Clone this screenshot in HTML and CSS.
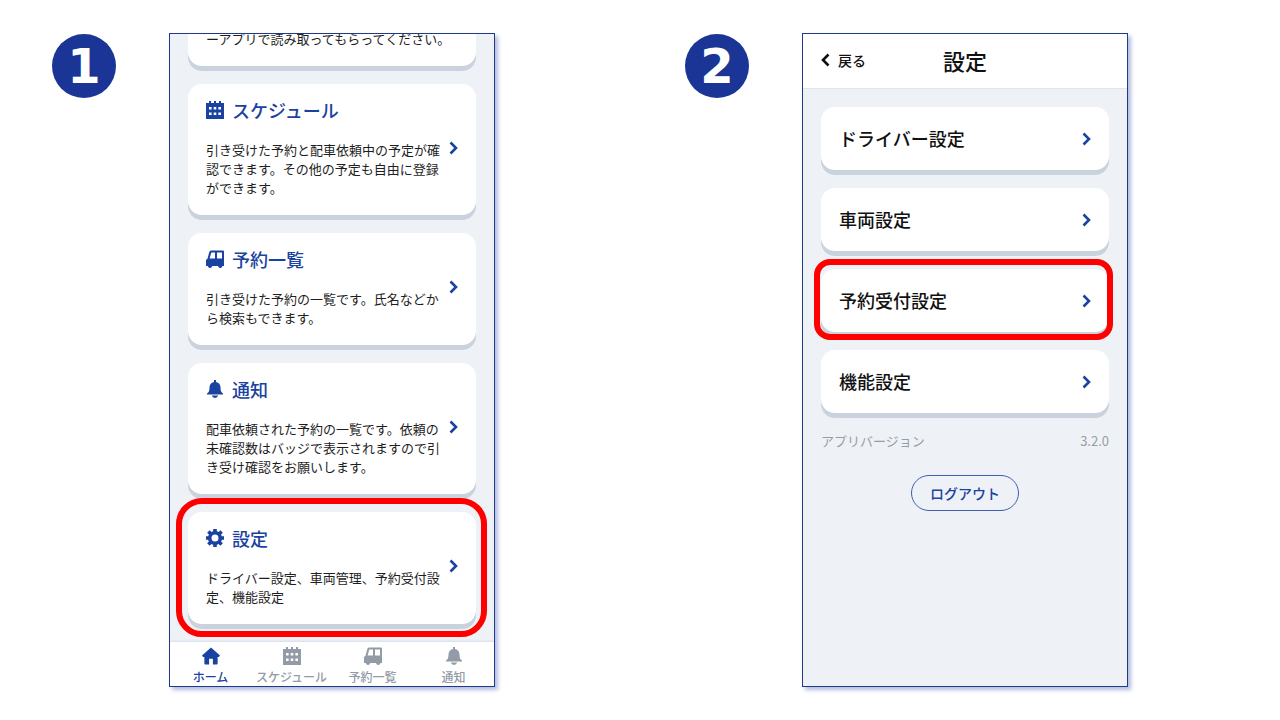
FILE: index.html
```html
<!DOCTYPE html>
<html lang="ja">
<head>
<meta charset="utf-8">
<meta name="viewport" content="width=device-width, initial-scale=1">
<title>設定</title>
<link rel="stylesheet" href="styles.css">
</head>
<body>
<svg class="sprite" aria-hidden="true">
  <symbol id="calendar" viewBox="1 1 18 18"><path fill-rule="evenodd" d="M1 3H4V1H6V3H9V1H11V3H14V1H16V3H19V19H1ZM4 7V9.600H6.600V7ZM8.700 7V9.600H11.300V7ZM13.400 7V9.600H16V7ZM4 12.400V15H6.600V12.400ZM8.700 12.400V15H11.300V12.400ZM13.400 12.400V15H16V12.400Z"/></symbol>
  <symbol id="van" viewBox="1 1 18 18"><path fill-rule="evenodd" d="M6 1.500H18Q19 1.500 19 2.500V17H17.500Q17 19 15.200 19T13 17H7.300Q6.800 19 5 19T2.800 17H1V11.500Q1 10.300 2.500 9.800L4.300 3Q4.700 1.500 6 1.500ZM6.300 3.500L4.600 9.500H10V3.500ZM12 3.500V9.500H17V3.500Z"/></symbol>
  <symbol id="bell" viewBox="1 1.400 18 18"><path d="M9 1.500H11V3.300C14.200 4 15.500 6.200 15.500 9C15.500 12.300 16 13.500 18 15V16H2V15C4 13.500 4.500 12.300 4.500 9C4.500 6.200 5.800 4 9 3.300ZM6.800 17H13.200Q12.500 19.300 10 19.300T6.800 17Z"/></symbol>
  <symbol id="gear" viewBox="1 1 18 18"><g fill="none" stroke="currentColor"><circle cx="10" cy="10" r="5.300" stroke-width="3.600"/><path stroke-width="3.600" d="M10 1V4M10 16V19M1 10H4M16 10H19M3.400 3.400L5.700 5.700M14.300 14.300L16.600 16.600M3.400 16.600L5.700 14.300M14.300 5.700L16.600 3.400"/></g></symbol>
  <symbol id="home" viewBox="0.500 0.500 19 19"><path d="M10 1L19.500 9.500L18.300 11H17V18Q17 19 16 19H12V13H8V19H4Q3 19 3 18V11H1.700L.500 9.500Z"/></symbol>
  <symbol id="chevron" viewBox="0 0 9 14"><path d="M1.500 1.500L7 7L1.500 12.500" fill="none" stroke="currentColor" stroke-width="2.600"/></symbol>
</svg>

<main class="steps">
  <section class="step">
    <span class="badge">1</span>
    <div class="phone">
      <div class="home-list">
        <div class="card"><p class="card-text">ーアプリで読み取ってもらってください。</p></div>
        <a class="card" href="#schedule">
          <div class="card-body">
            <h2 class="card-title"><svg class="icon"><use href="#calendar"/></svg>スケジュール</h2>
            <p class="card-text">引き受けた予約と配車依頼中の予定が確認できます。その他の予定も自由に登録ができます。</p>
          </div>
          <svg class="chevron"><use href="#chevron"/></svg>
        </a>
        <a class="card" href="#bookings">
          <div class="card-body">
            <h2 class="card-title"><svg class="icon"><use href="#van"/></svg>予約一覧</h2>
            <p class="card-text">引き受けた予約の一覧です。氏名などから検索もできます。</p>
          </div>
          <svg class="chevron"><use href="#chevron"/></svg>
        </a>
        <a class="card" href="#notices">
          <div class="card-body">
            <h2 class="card-title"><svg class="icon"><use href="#bell"/></svg>通知</h2>
            <p class="card-text">配車依頼された予約の一覧です。依頼の未確認数はバッジで表示されますので引き受け確認をお願いします。</p>
          </div>
          <svg class="chevron"><use href="#chevron"/></svg>
        </a>
        <a class="card marked" href="#settings">
          <div class="card-body">
            <h2 class="card-title"><svg class="icon"><use href="#gear"/></svg>設定</h2>
            <p class="card-text">ドライバー設定、車両管理、予約受付設定、機能設定</p>
          </div>
          <svg class="chevron"><use href="#chevron"/></svg>
        </a>
      </div>
      <nav class="tabs">
        <a class="tab current" href="#home"><svg class="icon"><use href="#home"/></svg>ホーム</a>
        <a class="tab" href="#schedule"><svg class="icon"><use href="#calendar"/></svg>スケジュール</a>
        <a class="tab" href="#bookings"><svg class="icon"><use href="#van"/></svg>予約一覧</a>
        <a class="tab" href="#notices"><svg class="icon"><use href="#bell"/></svg>通知</a>
      </nav>
    </div>
  </section>

  <section class="step">
    <span class="badge">2</span>
    <div class="phone" id="settings">
      <header class="bar">
        <button class="back" type="button"><svg class="chevron left"><use href="#chevron"/></svg>戻る</button>
        <h1 class="bar-title">設定</h1>
      </header>
      <div class="settings-list">
        <a class="card row" href="#driver">ドライバー設定<svg class="chevron"><use href="#chevron"/></svg></a>
        <a class="card row" href="#vehicle">車両設定<svg class="chevron"><use href="#chevron"/></svg></a>
        <a class="card row marked" href="#reception">予約受付設定<svg class="chevron"><use href="#chevron"/></svg></a>
        <a class="card row" href="#features">機能設定<svg class="chevron"><use href="#chevron"/></svg></a>
        <div class="version"><span>アプリバージョン</span><span>3.2.0</span></div>
        <button class="logout" type="button">ログアウト</button>
      </div>
    </div>
  </section>
</main>
</body>
</html>
```
FILE: styles.css
```css
* {
  box-sizing: border-box;
}

body {
  margin: 0;
  background: #fff;
  color: #1e1e1e;
  font-family: "Noto Sans CJK JP", sans-serif;
}

h1, h2, p {
  margin: 0;
}

a {
  color: inherit;
  text-decoration: none;
}

button {
  font: inherit;
  cursor: pointer;
}

.sprite {
  position: absolute;
  width: 0;
  height: 0;
}

.steps {
  display: grid;
  grid-template-columns: 1fr 1fr;
  gap: 38px;
  height: 100vh;
  padding: 33px 0 33px 52px;
}

.step {
  display: flex;
  align-items: stretch;
  gap: 53px;
  min-height: 0;
}

.badge {
  display: flex;
  flex: none;
  align-items: center;
  justify-content: center;
  width: 64px;
  height: 64px;
  margin-top: 1px;
  border-radius: 50%;
  background: #1b3596;
  color: #fff;
  font: bold 48px/64px "DejaVu Sans", sans-serif;
}

.phone {
  display: flex;
  flex: 0 1 326px;
  flex-direction: column;
  overflow: hidden;
  border: 1px solid #1f3a86;
  background: #eef2f7;
  box-shadow: 3px 3px 4px #b4bde0;
}

.home-list {
  display: flex;
  flex: 1;
  flex-direction: column;
  justify-content: flex-end;
  gap: 18px;
  min-height: 0;
  padding: 0 18px 18px;
}

.card {
  position: relative;
  display: flex;
  flex: none;
  align-items: center;
  justify-content: space-between;
  gap: 8px;
  padding: 14px 18px 18px;
  border-radius: 14px;
  background: #fff;
  box-shadow: 0 5px 0 #cad3dd;
}

.card-body {
  flex: 1;
}

.card-title {
  display: flex;
  align-items: center;
  gap: 8px;
  margin-bottom: 18px;
  color: #1a42a0;
  font-size: 18px;
  font-weight: 500;
  line-height: 24px;
}

.card-text {
  font-size: 13px;
  line-height: 19px;
}

.icon {
  width: 18px;
  height: 18px;
  fill: currentColor;
}

.chevron {
  flex: none;
  width: 9px;
  height: 14px;
  color: #1a42a0;
}

.marked::after {
  content: "";
  position: absolute;
  inset: -14px -11px -13px -12px;
  border: 6px solid #fe0000;
  border-radius: 26px;
}

.tabs {
  display: grid;
  flex: none;
  grid-template-columns: repeat(4, 1fr);
  padding-top: 5px;
  background: #fff;
  box-shadow: 0 -1px 2px #d7dee8;
}

.tab {
  display: flex;
  flex-direction: column;
  align-items: center;
  gap: 3px;
  color: #929ba6;
  font-size: 12px;
  font-weight: 500;
  line-height: 18px;
  white-space: nowrap;
}

.current {
  color: #1a42a0;
}

.bar {
  display: grid;
  grid-template-columns: 1fr auto 1fr;
  align-items: center;
  padding: 10px 18px 12px;
  border-bottom: 1px solid #dfe5ed;
  background: #fff;
  color: #111;
}

.bar-title {
  font-size: 22px;
  font-weight: 500;
  line-height: 32px;
}

.back {
  display: flex;
  align-items: center;
  justify-self: start;
  gap: 8px;
  padding: 0;
  border: 0;
  background: none;
  color: #111;
  font-size: 14px;
  font-weight: 500;
}

.left {
  color: #111;
  transform: rotate(180deg);
}

.settings-list {
  display: flex;
  flex-direction: column;
  gap: 18px;
  padding: 18px;
}

.row {
  padding: 18px;
  color: #111;
  font-size: 18px;
  font-weight: 500;
  line-height: 27px;
}

.row.marked::after {
  inset: -10px -4px -8px -7px;
  border-radius: 16px;
}

.version {
  display: flex;
  justify-content: space-between;
  color: #969da6;
  font-size: 13px;
  line-height: 19px;
}

.logout {
  align-self: center;
  margin-top: 7px;
  padding: 6px 18px;
  border: 1px solid #3f5fae;
  border-radius: 18px;
  background: none;
  color: #1a42a0;
  font-size: 14px;
  font-weight: 500;
  line-height: 22px;
}
```
